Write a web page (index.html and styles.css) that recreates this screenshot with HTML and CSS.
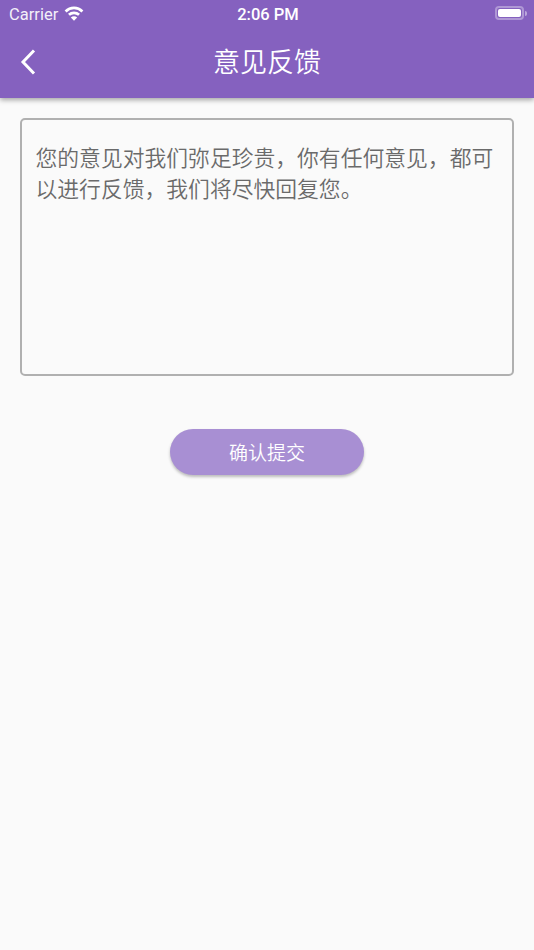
FILE: index.html
```html
<!DOCTYPE html>
<html lang="zh-CN">
<head>
  <meta charset="UTF-8">
  <title>意见反馈</title>
  <link rel="stylesheet" href="styles.css">
</head>
<body>

  <header class="app-bar">
    <div class="status-bar">
      <div class="status-left">
        <span class="carrier">Carrier</span>
        <svg class="wifi" width="20" height="15" viewBox="0 0 19 14">
          <path d="M1.500 5A11.500 11.500 0 0 1 17.500 5" fill="none" stroke="#fff" stroke-width="2.600"/>
          <path d="M4.700 8.200A7 7 0 0 1 14.300 8.200" fill="none" stroke="#fff" stroke-width="2.600"/>
          <path d="M9.500 14 6.500 10.800A4.300 4.300 0 0 1 12.500 10.800z" fill="#fff"/>
        </svg>
      </div>
      <span class="clock">2:06 PM</span>
      <div class="battery">
        <div class="battery-body"><div class="battery-level"></div></div>
        <div class="battery-cap"></div>
      </div>
    </div>
    <div class="nav-bar">
      <svg class="back" width="18" height="28" viewBox="0 0 18 28">
        <path d="M15 2.500 4 14l11 11.500" fill="none" stroke="#fff" stroke-width="3"/>
      </svg>
      <h1 class="page-title">意见反馈</h1>
    </div>
  </header>

  <main class="content">
    <div class="feedback-box">
      <p class="placeholder">您的意见对我们弥足珍贵，你有任何意见，都可以进行反馈，我们将尽快回复您。</p>
    </div>
    <button class="submit-btn" type="button">确认提交</button>
  </main>

</body>
</html>
```

FILE: styles.css
```css
* {
  box-sizing: border-box;
}
html, body {
  height: 100%;
}
body {
  margin: 0;
  background: #fafafa;
  font-family: "Roboto", "Noto Sans CJK SC", sans-serif;
  overflow: hidden;
}
.app-bar {
  height: 98px;
  background: #8561bf;
  color: #fff;
  box-shadow: 0 2px 5px rgba(0, 0, 0, 0.35);
}
.status-bar {
  height: 28px;
  padding: 0 7px 0 9px;
  display: grid;
  grid-template-columns: 1fr auto 1fr;
  align-items: center;
}
.status-left {
  display: flex;
  align-items: center;
  gap: 6px;
}
.carrier {
  font-size: 16.500px;
  opacity: 0.9;
}
.wifi {
  margin-top: -2px;
}
.clock {
  font-size: 16.500px;
  font-weight: 500;
}
.battery {
  justify-self: end;
  margin-top: -2px;
  display: flex;
  align-items: center;
  gap: 1px;
}
.battery-body {
  width: 29px;
  height: 14px;
  padding: 1px;
  border: 2px solid rgba(255, 255, 255, 0.35);
  border-radius: 4px;
}
.battery-level {
  height: 100%;
  background: #fff;
  border-radius: 2px;
}
.battery-cap {
  width: 2px;
  height: 5px;
  background: rgba(255, 255, 255, 0.45);
  border-radius: 0 2px 2px 0;
}
.nav-bar {
  height: 70px;
  position: relative;
  display: flex;
  align-items: center;
  justify-content: center;
}
.back {
  position: absolute;
  left: 19px;
  top: 20px;
}
.page-title {
  margin: 0;
  font-size: 27px;
  font-weight: 350;
  line-height: 1;
}
.content {
  padding: 20px 20px 0;
  display: flex;
  flex-direction: column;
  align-items: center;
}
.feedback-box {
  width: 100%;
  height: 258px;
  padding: 23px 13.500px;
  border: 2px solid #b0b0b0;
  border-radius: 5px;
}
.placeholder {
  margin: 0;
  font-size: 21.800px;
  font-weight: 350;
  line-height: 31px;
  color: #6a6a6a;
}
.submit-btn {
  margin-top: 53px;
  width: 194px;
  height: 46px;
  padding: 0 0 2px;
  border: none;
  border-radius: 23px;
  background: #a88fd3;
  color: #fff;
  font-family: inherit;
  font-size: 19px;
  font-weight: 350;
  box-shadow: 0 2px 3px rgba(0, 0, 0, 0.25);
}
```
